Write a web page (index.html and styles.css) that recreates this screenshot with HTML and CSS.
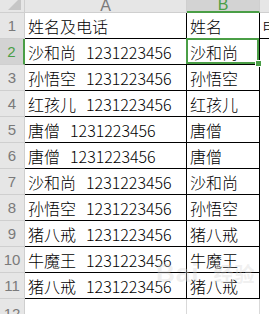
FILE: index.html
```
<!DOCTYPE html>
<html lang="zh-CN">
<head>
    <meta charset="UTF-8">
    <meta name="viewport" content="width=device-width, initial-scale=1.0">
    <title>表格</title>
    <link rel="stylesheet" href="styles.css">
</head>
<body>
    <div class="sheet">
        <!-- column headers -->
        <div class="corner"><span class="corner-mark"></span></div>
        <div class="colhead">A</div>
        <div class="colhead sel">B</div>
        <div class="colhead">C</div>

        <div class="rowhead">1</div>
        <div class="cell">姓名及电话</div>
        <div class="cell">姓名</div>
        <div class="cell edge top">电话</div>

        <div class="rowhead sel">2</div>
        <div class="cell">沙和尚<span class="num">1231223456</span></div>
        <div class="cell active">沙和尚</div>
        <div class="cell edge"></div>

        <div class="rowhead">3</div>
        <div class="cell">孙悟空<span class="num">1231223456</span></div>
        <div class="cell">孙悟空</div>
        <div class="cell edge"></div>

        <div class="rowhead">4</div>
        <div class="cell">红孩儿<span class="num">1231223456</span></div>
        <div class="cell">红孩儿</div>
        <div class="cell edge"></div>

        <div class="rowhead">5</div>
        <div class="cell">唐僧<span class="num">1231223456</span></div>
        <div class="cell">唐僧</div>
        <div class="cell edge"></div>

        <div class="rowhead">6</div>
        <div class="cell">唐僧<span class="num">1231223456</span></div>
        <div class="cell">唐僧</div>
        <div class="cell edge"></div>

        <div class="rowhead">7</div>
        <div class="cell">沙和尚<span class="num">1231223456</span></div>
        <div class="cell">沙和尚</div>
        <div class="cell edge"></div>

        <div class="rowhead">8</div>
        <div class="cell">孙悟空<span class="num">1231223456</span></div>
        <div class="cell">孙悟空</div>
        <div class="cell edge"></div>

        <div class="rowhead">9</div>
        <div class="cell">猪八戒<span class="num">1231223456</span></div>
        <div class="cell">猪八戒</div>
        <div class="cell edge"></div>

        <div class="rowhead">10</div>
        <div class="cell">牛魔王<span class="num">1231223456</span></div>
        <div class="cell">牛魔王</div>
        <div class="cell edge"></div>

        <div class="rowhead">11</div>
        <div class="cell">猪八戒<span class="num">1231223456</span></div>
        <div class="cell">猪八戒</div>
        <div class="cell edge"></div>

        <div class="rowhead last">12</div>
        <div class="cell blank"></div>
        <div class="cell blank"></div>
        <div class="cell blank edge"></div>

        <!-- faint site watermark -->
        <div class="watermark">Bai<span class="wm-cn">经验</span></div>
    </div>
</body>
</html>
```
FILE: styles.css
```
:root {
    --head-bg: #e6e6e6;
    --head-sel: #d3d3d3;
    --head-line: #cfcfcf;
    --head-text: #7a7a7a;
    --grid-line: #d9d9d9;
    --green: #4a9e46;
}

body {
    margin: 0;
    background: #fff;
}

.sheet {
    position: relative;
    width: 269px;
    height: 314px;
    overflow: hidden;
    display: grid;
    grid-template-columns: 25px 162px 73px 40px;
    grid-template-rows: 13px repeat(11, 26px) 26px;
    font-family: "Noto Sans CJK SC", sans-serif;
    color: #000;
}

.corner {
    position: relative;
    background: var(--head-bg);
    border-right: 1px solid var(--head-line);
    border-bottom: 1px solid var(--head-line);
    overflow: hidden;
}

.corner-mark {
    position: absolute;
    right: 3px;
    bottom: 2px;
    width: 0;
    height: 0;
    border-left: 13px solid transparent;
    border-bottom: 13px solid #c6c6c6;
}

.colhead {
    background: var(--head-bg);
    border-right: 1px solid var(--head-line);
    border-bottom: 1px solid var(--head-line);
    display: flex;
    justify-content: center;
    align-items: flex-end;
    overflow: hidden;
    font-family: "Liberation Sans", sans-serif;
    font-size: 16px;
    line-height: 13px;
    color: var(--head-text);
}

.colhead.sel {
    background: var(--head-sel);
    color: var(--green);
    border-bottom: 2px solid var(--green);
}

.rowhead {
    background: var(--head-bg);
    border-right: 1px solid var(--head-line);
    border-bottom: 1px solid var(--head-line);
    display: flex;
    justify-content: center;
    align-items: center;
    font-family: "Liberation Sans", sans-serif;
    font-size: 15px;
    color: var(--head-text);
}

.rowhead.sel {
    background: var(--head-sel);
    color: var(--green);
    border-right: 2px solid var(--green);
}

.rowhead.last {
    align-items: flex-start;
    padding-top: 6px;
}

.cell {
    position: relative;
    border-right: 1px solid #000;
    border-bottom: 1px solid #000;
    display: flex;
    align-items: center;
    padding: 1px 0 0 3px;
    font-size: 16px;
    font-weight: 300;
    white-space: pre;
    overflow: hidden;
}

.cell.edge {
    border-right: none;
    border-bottom: none;
    padding-left: 2px;
}

.cell.edge.top {
    border-bottom: 1px solid #000;
}

.cell.blank {
    border-right: 1px solid var(--grid-line);
    border-bottom: 1px solid var(--grid-line);
}

.num {
    padding-left: 10px;
}

.cell.active {
    overflow: visible;
}

.cell.active::after {
    content: "";
    position: absolute;
    top: -1px;
    left: -1px;
    right: 0;
    bottom: 0;
    border: 2px solid var(--green);
    z-index: 2;
}

.cell.active::before {
    content: "";
    position: absolute;
    right: -3px;
    bottom: -3px;
    width: 5px;
    height: 5px;
    background: var(--green);
    border: 1px solid #fff;
    z-index: 3;
}

.watermark {
    position: absolute;
    left: 156px;
    top: 258px;
    white-space: nowrap;
    font-family: "Liberation Sans", sans-serif;
    font-size: 26px;
    font-weight: bold;
    color: rgba(215, 215, 215, 0.4);
    letter-spacing: 1px;
    pointer-events: none;
}

.wm-cn {
    font-family: "Noto Sans CJK SC", sans-serif;
    font-size: 20px;
    padding-left: 14px;
}
```
